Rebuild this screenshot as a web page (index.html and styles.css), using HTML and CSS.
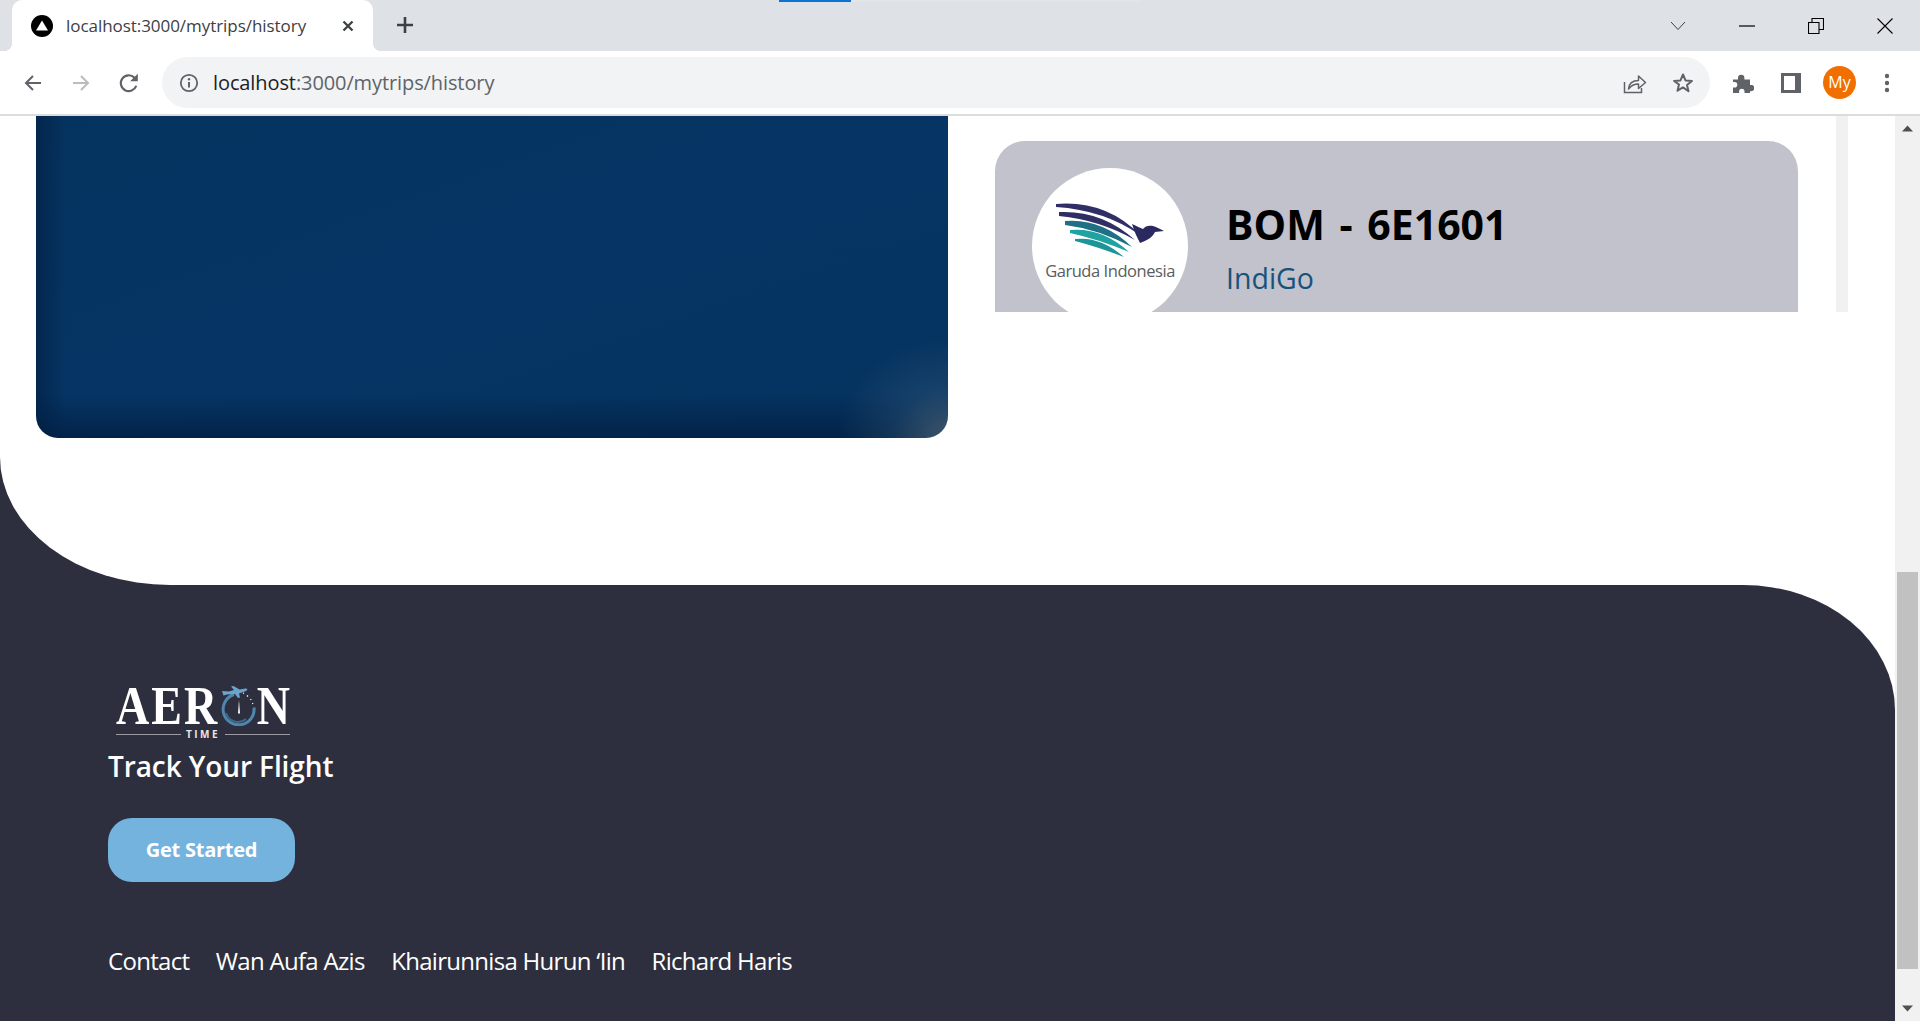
FILE: index.html
```html
<!DOCTYPE html>
<html lang="en">
<head>
  <meta charset="UTF-8">
  <title>localhost:3000/mytrips/history</title>
  <link rel="stylesheet" href="styles.css">
</head>
<body>
  <!-- browser window top -->
  <div class="tabstrip">
    <div class="loadbar"><span></span></div>
    <div class="tab">
      <svg class="favicon" width="22" height="22" viewBox="0 0 22 22"><circle cx="11" cy="11" r="11" fill="#000"/><path d="M11 5.500 17 15.500H5z" fill="#fff"/></svg>
      <span class="tab-title">localhost:3000/mytrips/history</span>
      <svg class="tab-close" width="12" height="12" viewBox="0 0 12 12"><path d="M1.500 1.500l9 9M10.500 1.500l-9 9" stroke="#3c4043" stroke-width="2.300"/></svg>
    </div>
    <svg class="new-tab" width="20" height="20" viewBox="0 0 20 20"><path d="M10 2v16M2 10h16" stroke="#3c4043" stroke-width="2.600"/></svg>
    <div class="window-btns">
      <svg width="16" height="10" viewBox="0 0 16 10"><path d="M1 1l7 7.500L15 1" fill="none" stroke="#3c4043" stroke-width="1"/></svg>
      <svg width="16" height="2" viewBox="0 0 16 2"><path d="M0 1h16" stroke="#000" stroke-width="1.200"/></svg>
      <svg width="16" height="16" viewBox="0 0 16 16"><path d="M.5 4.500h10.500v11H.5zM4 4.500V.5h11.500v11H11" fill="none" stroke="#000" stroke-width="1.100"/></svg>
      <svg width="16" height="16" viewBox="0 0 16 16"><path d="M.5.5l15 15M15.500.5l-15 15" stroke="#000" stroke-width="1.100"/></svg>
    </div>
  </div>

  <div class="toolbar">
    <svg width="20" height="20" viewBox="0 0 20 20"><path d="M18 10H3M10 3l-7 7 7 7" fill="none" stroke="#5f6368" stroke-width="2"/></svg>
    <svg width="20" height="20" viewBox="0 0 20 20"><path d="M2 10h15M10 3l7 7-7 7" fill="none" stroke="#babcbe" stroke-width="2"/></svg>
    <svg class="nav-reload" width="22" height="22" viewBox="0 0 20 20"><path d="M16.600 12.500A7.200 7.200 0 1 1 15 5.200" fill="none" stroke="#5f6368" stroke-width="2"/><path d="M18 1.500v7h-7z" fill="#5f6368"/></svg>
    <div class="addressbar">
      <svg width="20" height="20" viewBox="0 0 20 20"><circle cx="10" cy="10" r="8.200" fill="none" stroke="#5f6368" stroke-width="1.800"/><path d="M10 9v5.500" stroke="#5f6368" stroke-width="2"/><circle cx="10" cy="6.200" r="1.200" fill="#5f6368"/></svg>
      <span class="url"><b>localhost</b>:3000/mytrips/history</span>
      <svg class="addr-share" width="24" height="22" viewBox="0 0 24 22"><path d="M1.500 10v10.500h17V16" fill="none" stroke="#5f6368" stroke-width="1.500"/><path d="M5.500 17c.5-5.500 4.500-8.500 10-8.500V4l7 6.500-7 6v-4.500c-4 0-7.500 1.500-10 5z" fill="none" stroke="#5f6368" stroke-width="1.500" stroke-linejoin="round"/></svg>
      <svg width="22" height="22" viewBox="0 0 22 22"><path d="M11 2.500l2.500 5.900 6.400.5-4.900 4.100 1.500 6.200L11 15.400l-5.500 3.300L7 12.500 2.100 8.900l6.400-.5z" fill="none" stroke="#5f6368" stroke-width="2" stroke-linejoin="round"/></svg>
    </div>
    <svg class="tool-puzzle" width="22" height="22" viewBox="0 0 22 22"><path d="M1 7.500h5V6a3.200 3.200 0 0 1 6.400 0v1.500h5.600V13h1.200a3.100 3.100 0 0 1 0 6.200H18V21H12.500v-1.500a2.700 2.700 0 0 0-5.400 0V21H1v-5.500h1.500a2.800 2.800 0 0 0 0-5.600H1z" fill="#5f6368"/></svg>
    <svg width="22" height="22" viewBox="0 0 22 22"><rect x="1" y="1" width="20" height="20" fill="#5f6368"/><rect x="4" y="4" width="11" height="14" fill="#fff"/></svg>
    <div class="avatar">My</div>
    <svg width="6" height="20" viewBox="0 0 6 20"><circle cx="3" cy="3" r="2.200" fill="#5f6368"/><circle cx="3" cy="10" r="2.200" fill="#5f6368"/><circle cx="3" cy="17" r="2.200" fill="#5f6368"/></svg>
  </div>

  <div class="viewport">
    <div class="page">
      <div class="content-bg">
        <section class="content">
          <div class="hero"></div>
          <div class="flight-list">
            <div class="flight-scroll">
              <div class="flight-card">
                <div class="airline-logo">
                  <svg width="156" height="156" viewBox="0 0 156 156">
                    <path d="M24 36Q74 32 108 67Q72 42 24 39z" fill="#2f2f66"/>
                    <path d="M27 44Q70 42 103 72Q68 52 27 48z" fill="#2f2f66"/>
                    <path d="M33 53Q70 50 100 79Q66 61 33 57z" fill="#1f6f86"/>
                    <path d="M38 62Q70 59 97 84Q66 71 38 65z" fill="#1fa3a0"/>
                    <path d="M43 71Q68 68 92 89Q66 79 43 73z" fill="#1c949a"/>
                    <path d="M100 56c5 2 8 4 11 5 2-3 6-4 10-3 4 1 7 3 11 5l-9 1c-2 4-6 8-15 11-3-6-6-12-8-19z" fill="#2a2a60"/>
                    <text class="garuda-name" x="78" y="109" text-anchor="middle">Garuda Indonesia</text>
                  </svg>
                </div>
                <div class="flight-info">
                  <h2>BOM - 6E1601</h2>
                  <p>IndiGo</p>
                </div>
              </div>
            </div>
            <div class="inner-scroll"></div>
          </div>
        </section>
      </div>

      <div class="footer-bg">
        <footer class="footer">
          <div class="brand">
            <div class="brand-word">
              <span>AER</span>
              <svg class="brand-clock" width="36" height="40" viewBox="0 0 36 40">
                <path d="M14 8.500a15.500 15.500 0 1 0 20 13" fill="none" stroke="#4f86ad" stroke-width="3"/>
                <path d="M6 27a12.500 12.500 0 0 0 20 6" fill="none" stroke="#3b6a8c" stroke-width="2"/>
                <path d="M2 5l7 .5 5-1.500-3-3.500 2.500-.5 6 3.500 6-1c2 0 2.500 1.500 .5 2.500l-7 2.500 1 4-2 .5-3-4-8 .5-3.500 1z" fill="#6aa5cf"/>
                <path d="M19 14l1 13.500h-2z" fill="#fff"/>
                <path d="M23 7l1 .5M27 9.500l1 1M30.500 13l.7 1M32.500 17l.4 1" stroke="#fff" stroke-width="1.200"/>
              </svg>
              <span class="brand-n">N</span>
            </div>
            <div class="brand-sub"><i></i><span>TIME</span><i></i></div>
          </div>
          <p class="tagline">Track Your Flight</p>
          <a class="get-started" href="#">Get Started</a>
          <nav class="footer-links">
            <a href="#">Contact</a>
            <a href="#">Wan Aufa Azis</a>
            <a href="#">Khairunnisa Hurun ‘Iin</a>
            <a href="#">Richard Haris</a>
          </nav>
        </footer>
      </div>
    </div>

    <div class="scrollbar">
      <svg class="scroll-arrow" width="25" height="25" viewBox="0 0 25 25"><path d="M7 15.500h11l-5.500-6z" fill="#505050"/></svg>
      <div class="scroll-track"><div class="scroll-thumb"></div></div>
      <svg class="scroll-arrow" width="25" height="25" viewBox="0 0 25 25"><path d="M7 9.500h11l-5.500 6z" fill="#505050"/></svg>
    </div>
  </div>
</body>
</html>
```
FILE: styles.css
```css
html, body {
  height: 100%;
  overflow: hidden;
}
body {
  margin: 0;
  display: flex;
  flex-direction: column;
  font-family: "Open Sans", "Noto Sans", sans-serif;
  background-color: #ffffff;
}

/* browser top */
.tabstrip {
  position: relative;
  flex: none;
  height: 51px;
  display: flex;
  align-items: flex-end;
  padding-left: 12px;
  background-color: #dee1e6;
}
.loadbar {
  position: absolute;
  top: 0;
  left: 779px;
  width: 362px;
  height: 2px;
  background-color: #e3e4e7;
}
.loadbar span {
  display: block;
  width: 72px;
  height: 2px;
  background-color: #0a73d4;
}
.tab {
  position: relative;
  width: 361px;
  height: 51px;
  box-sizing: border-box;
  display: flex;
  align-items: center;
  padding: 0 19px;
  background-color: #ffffff;
  border-radius: 10px 10px 0 0;
}
.tab::before,
.tab::after {
  content: "";
  position: absolute;
  bottom: 0;
  width: 8px;
  height: 8px;
}
.tab::before {
  left: -8px;
  background: radial-gradient(circle at 0 0, transparent 8px, #ffffff 8px);
}
.tab::after {
  right: -8px;
  background: radial-gradient(circle at 100% 0, transparent 8px, #ffffff 8px);
}
.favicon {
  flex: none;
}
.tab-title {
  margin-left: 13px;
  flex: 1;
  font-size: 17px;
  letter-spacing: -0.05px;
  color: #3c4043;
  white-space: nowrap;
}
.new-tab {
  margin: 0 0 16px 22px;
}
.window-btns {
  margin-left: auto;
  height: 51px;
  display: flex;
  align-items: center;
  gap: 53px;
  padding-right: 27px;
}
.toolbar {
  flex: none;
  height: 63px;
  display: flex;
  align-items: center;
  gap: 28px;
  padding: 0 30px 0 23px;
  background-color: #ffffff;
  border-bottom: 2px solid #dadce0;
}
.nav-reload {
  margin-left: -1px;
  margin-right: -6px;
}
.addressbar {
  flex: 1;
  height: 51px;
  display: flex;
  align-items: center;
  gap: 14px;
  padding: 0 16px 0 17px;
  background-color: #f1f3f4;
  border-radius: 26px;
}
.url {
  flex: 1;
  font-size: 20px;
  letter-spacing: -0.1px;
  color: #5f6368;
}
.url b {
  font-weight: 400;
  color: #202124;
}
.addr-share {
  margin-right: 11px;
}
.tool-puzzle {
  margin-left: -6px;
  margin-right: -2px;
}
.avatar {
  width: 33px;
  height: 33px;
  border-radius: 50%;
  background-color: #f06f00;
  color: #ffffff;
  font-size: 16px;
  line-height: 33px;
  text-align: center;
  margin-left: -7px;
}

/* page */
.viewport {
  flex: 1;
  min-height: 0;
  display: flex;
}
.page {
  flex: 1;
  min-width: 0;
  display: flex;
  flex-direction: column;
}
.content-bg {
  height: 469px;
  flex: none;
  background-color: #2e2f3e;
}
.content {
  height: 100%;
  box-sizing: border-box;
  display: flex;
  align-items: flex-start;
  gap: 47px;
  padding: 0 47px 0 36px;
  background-color: #ffffff;
  border-bottom-left-radius: 170px 128px;
}
.hero {
  width: 912px;
  height: 322px;
  flex: none;
  border-radius: 0 0 22px 22px;
  background-color: #05335f;
  background-image:
    radial-gradient(ellipse 110px 100px at 100% 100%, rgba(85, 105, 120, 0.7), rgba(60, 95, 125, 0.3) 50%, rgba(60, 95, 125, 0) 100%),
    linear-gradient(to top, rgba(0, 28, 62, 0.7), rgba(0, 28, 62, 0) 45px),
    linear-gradient(to right, rgba(0, 28, 62, 0.55), rgba(0, 28, 62, 0) 30px),
    linear-gradient(to bottom right, #05335f, #063565 50%, #05335f);
}
.flight-list {
  flex: 1;
  height: 196px;
  display: flex;
  justify-content: space-between;
}
.flight-scroll {
  width: 803px;
  padding-top: 25px;
  box-sizing: border-box;
}
.flight-card {
  height: 171px;
  display: flex;
  align-items: flex-start;
  overflow: hidden;
  padding-left: 37px;
  background-color: #c1c2cb;
  border-radius: 30px 30px 0 0;
}
.airline-logo {
  flex: none;
  width: 156px;
  height: 156px;
  margin-top: 27px;
  border-radius: 50%;
  background-color: #ffffff;
}
.garuda-name {
  font-family: "Open Sans", sans-serif;
  font-size: 16.500px;
  letter-spacing: -0.45px;
  fill: #595c60;
}
.flight-info {
  margin-left: 38px;
  padding-top: 56px;
}
.flight-info h2 {
  margin: 0;
  font-size: 41px;
  line-height: 54px;
  font-weight: 700;
  word-spacing: 4px;
  color: #000000;
}
.flight-info p {
  margin: 7px 0 0;
  font-size: 28.500px;
  line-height: 40px;
  color: #17527c;
}
.inner-scroll {
  width: 12px;
  background-color: #f1f1f1;
}

/* footer */
.footer-bg {
  flex: 1;
  min-height: 0;
  background-color: #ffffff;
}
.footer {
  height: 100%;
  box-sizing: border-box;
  padding: 100px 108px 0;
  background-color: #2e2f3e;
  border-top-right-radius: 152px 125px;
}
.brand {
  width: 174px;
  margin-left: 8px;
}
.brand-word {
  height: 42px;
  display: flex;
  align-items: center;
  justify-content: space-between;
  font-family: "Liberation Serif", serif;
  font-size: 46px;
  line-height: 42px;
  font-weight: 700;
  letter-spacing: 2px;
  color: #ffffff;
}
.brand-word span {
  display: inline-block;
  transform: scaleY(1.18);
}
.brand-word .brand-n {
  letter-spacing: 0;
}
.brand-clock {
  flex: none;
}
.brand-sub {
  display: flex;
  align-items: center;
  gap: 5px;
  height: 14px;
  font-family: "Open Sans", sans-serif;
  font-size: 10px;
  font-weight: 700;
  letter-spacing: 2.500px;
  color: #e8e8ea;
}
.brand-sub i {
  flex: 1;
  height: 1px;
  background-color: #9a9ba3;
}
.tagline {
  margin: 6px 0 0;
  font-size: 28px;
  line-height: 38px;
  font-weight: 600;
  letter-spacing: -0.1px;
  color: #ffffff;
}
.get-started {
  display: block;
  width: 187px;
  height: 64px;
  margin-top: 33px;
  border-radius: 24px;
  background-color: #74b3de;
  color: #ffffff;
  font-size: 20px;
  font-weight: 700;
  line-height: 64px;
  letter-spacing: -0.25px;
  text-align: center;
  text-decoration: none;
}
.footer-links {
  display: flex;
  gap: 26.500px;
  margin-top: 62px;
}
.footer-links a {
  font-size: 24px;
  line-height: 34px;
  letter-spacing: -0.7px;
  color: #ffffff;
  text-decoration: none;
}

/* window scrollbar */
.scrollbar {
  flex: none;
  width: 25px;
  display: flex;
  flex-direction: column;
  background-color: #f1f1f1;
}
.scroll-arrow {
  flex: none;
}
.scroll-track {
  flex: 1;
  padding: 431px 2px 0;
}
.scroll-thumb {
  height: 397px;
  background-color: #c1c1c1;
}
```
